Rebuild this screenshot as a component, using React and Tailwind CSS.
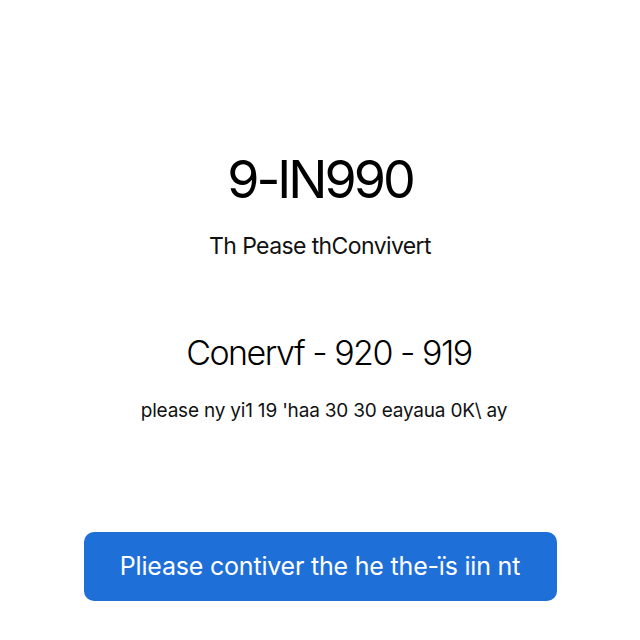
import React from 'react';

const App = () => {
    return (
        <div className="w-[640px] h-[640px] bg-white flex flex-col items-center text-black font-['Inter',sans-serif]">
            {/* Heading */}
            <h1 className="mt-[148px] text-[52px] leading-[64px] tracking-[-3px] font-normal">
                9-IN990
            </h1>
            <p className="mt-[20px] text-[23px] leading-[28px] tracking-[-0.6px] text-[#111]">
                Th Pease thConvivert
            </p>

            {/* Conversion */}
            <p className="mt-[70px] pl-[18px] text-[34px] leading-[46px] tracking-[-1.5px] font-light">
                Conervf - 920 - 919
            </p>
            <p className="mt-[22px] pl-[8px] text-[19px] leading-[26px] tracking-[-0.2px] text-[#111]">
                please ny yi1 19 'haa 30 30 eayaua 0K\ ay
            </p>

            {/* Action */}
            <button className="mt-[108px] w-[473px] h-[69px] rounded-[10px] bg-[#1f6fd8] text-white text-[25px] tracking-[-0.2px] flex items-center justify-center">
                Pliease contiver the he the-ïs iin nt
            </button>
        </div>
    );
};

export default App;
